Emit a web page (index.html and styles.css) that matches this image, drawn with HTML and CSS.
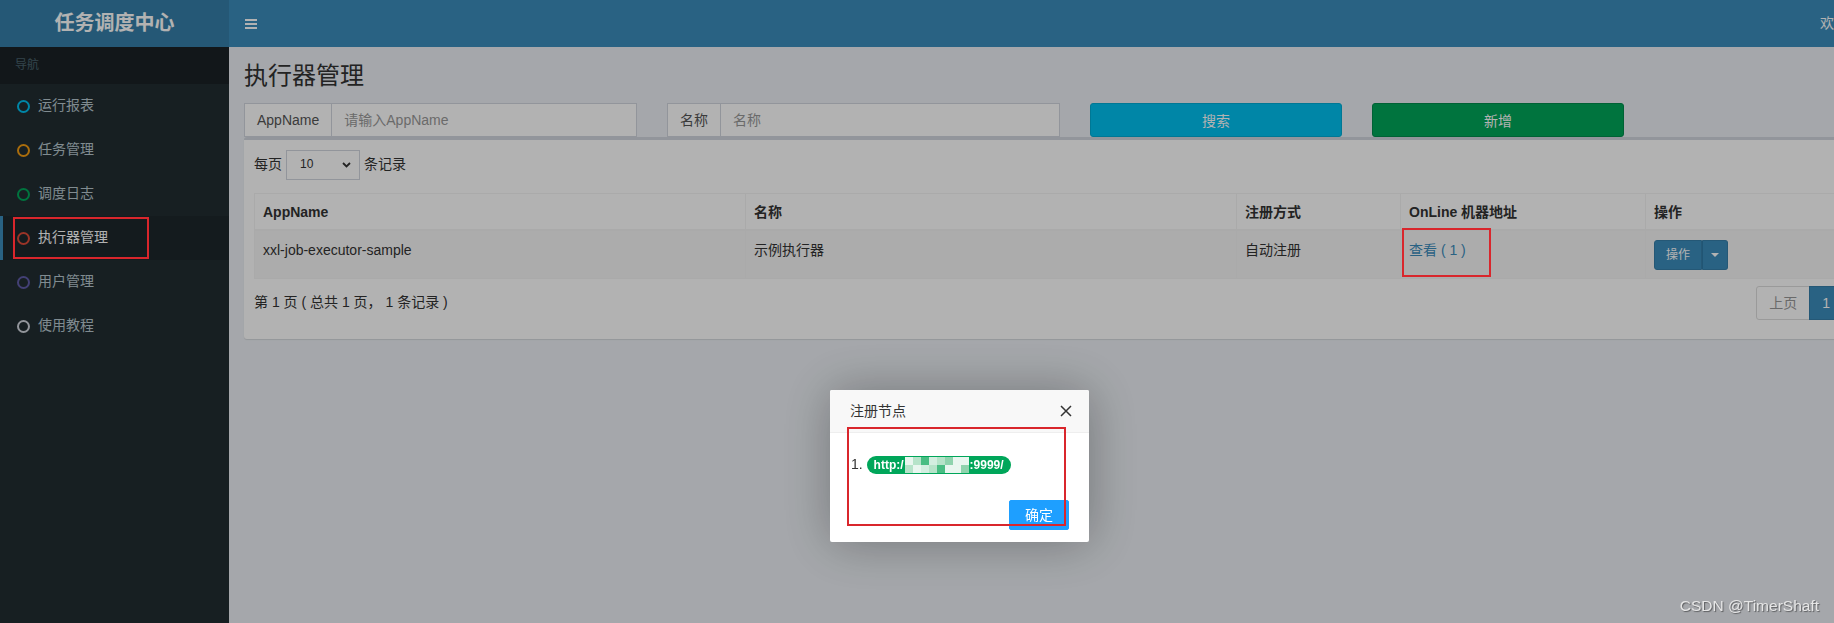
FILE: index.html
```html
<!DOCTYPE html>
<html lang="zh-CN">
<head>
<meta charset="utf-8">
<title>任务调度中心</title>
<link rel="stylesheet" href="styles.css">
</head>
<body>
<div class="wrapper">
  <header class="main-header">
    <div class="logo">任务调度中心</div>
    <nav class="navbar">
      <span class="toggle"><svg width="12" height="10" viewBox="0 0 12 10"><rect y="0" width="12" height="2"/><rect y="4" width="12" height="2"/><rect y="8" width="12" height="2"/></svg></span>
      <span class="welcome">欢迎 admin</span>
    </nav>
  </header>
  <div class="main">
    <aside class="sidebar">
      <div class="nav-header">导航</div>
      <ul class="menu">
        <li><i class="dot aqua"></i>运行报表</li>
        <li><i class="dot yellow"></i>任务管理</li>
        <li><i class="dot green"></i>调度日志</li>
        <li class="active"><i class="dot red"></i>执行器管理</li>
        <li><i class="dot purple"></i>用户管理</li>
        <li><i class="dot gray"></i>使用教程</li>
      </ul>
    </aside>
    <div class="content-wrapper">
      <div class="content-header"><h1 class="page-title">执行器管理</h1></div>
      <section class="content">
        <div class="search-row">
          <div class="col col-3">
            <div class="input-group"><span class="addon">AppName</span><input class="form-control" placeholder="请输入AppName"></div>
          </div>
          <div class="col col-3">
            <div class="input-group"><span class="addon">名称</span><input class="form-control" placeholder="名称"></div>
          </div>
          <div class="col col-2"><button class="btn btn-info">搜索</button></div>
          <div class="col col-2"><button class="btn btn-success">新增</button></div>
        </div>
        <div class="box">
          <div class="box-body">
            <div class="length">每页 <span class="select"><span>10</span><svg width="9" height="6" viewBox="0 0 9 6"><path d="M1 1 L4.5 4.5 L8 1" fill="none" stroke="#333" stroke-width="1.8"/></svg></span> 条记录</div>
            <table class="table">
              <colgroup><col class="w-app"><col class="w-name"><col class="w-type"><col class="w-addr"><col></colgroup>
              <thead>
                <tr><th>AppName</th><th>名称</th><th>注册方式</th><th>OnLine 机器地址</th><th>操作</th></tr>
              </thead>
              <tbody>
                <tr>
                  <td>xxl-job-executor-sample</td>
                  <td>示例执行器</td>
                  <td>自动注册</td>
                  <td><a class="link">查看 ( 1 )</a></td>
                  <td><span class="btn-group"><span class="btn-op">操作</span><span class="btn-caret"><i class="caret"></i></span></span></td>
                </tr>
              </tbody>
            </table>
            <div class="info-row">
              <div class="info">第 1 页 ( 总共 1 页， 1 条记录 )</div>
              <ul class="pagination"><li class="prev">上页</li><li class="active">1</li><li class="next">下页</li></ul>
            </div>
          </div>
        </div>
      </section>
    </div>
  </div>
</div>

<div class="shade"></div>

<div class="layer">
  <div class="layer-title">注册节点<span class="layer-close"><svg width="12" height="12" viewBox="0 0 12 12"><path d="M1 1 L11 11 M11 1 L1 11" stroke="#333" stroke-width="1.5" fill="none"/></svg></span></div>
  <div class="layer-content">1. <span class="badge">http:/<span class="mosaic"><i class="c1"></i><i class="c2"></i><i class="c3"></i><i class="c4"></i><i class="c2"></i><i class="c5"></i><i class="c1"></i><i class="c1"></i><i class="c2"></i><i class="c1"></i><i class="c4"></i><i class="c2"></i><i class="c3"></i><i class="c1"></i><i class="c1"></i><i class="c5"></i></span>:9999/</span></div>
  <div class="layer-btn"><a>确定</a></div>
</div>

<div class="annot annot-nav"></div>
<div class="annot annot-addr"></div>
<div class="annot annot-layer"></div>

<div class="watermark">CSDN @TimerShaft</div>
</body>
</html>
```

FILE: styles.css
```css
html, body {
  margin: 0;
  padding: 0;
  width: 1834px;
  height: 623px;
  overflow: hidden;
}
body {
  position: relative;
  font-family: "Liberation Sans", "Noto Sans CJK SC", sans-serif;
  font-size: 14px;
  line-height: 1.42857;
  color: #333;
}
.wrapper {
  width: 1951px;
  height: 623px;
  display: flex;
  flex-direction: column;
}

/* header */
.main-header {
  display: flex;
  height: 47px;
  flex: none;
}
.logo {
  width: 229px;
  flex: none;
  background: #367fa9;
  color: #fff;
  font-size: 20px;
  font-weight: bold;
  text-align: center;
  line-height: 47px;
}
.navbar {
  flex: 1;
  background: #3c8dbc;
  display: flex;
  align-items: center;
  color: #fff;
}
.toggle {
  display: flex;
  padding-left: 16px;
  fill: #fff;
}
.welcome {
  margin-left: auto;
  width: 90px;
  margin-right: 41px;
  font-size: 14px;
}

/* sidebar */
.main {
  display: flex;
  flex: 1;
}
.sidebar {
  width: 229px;
  flex: none;
  background: #222d32;
}
.nav-header {
  background: #1a2226;
  color: #4b646f;
  font-size: 12px;
  line-height: 17px;
  padding: 10px 15px;
}
.menu {
  list-style: none;
  margin: 0;
  padding: 0;
}
.menu li {
  display: flex;
  align-items: center;
  height: 44px;
  padding-left: 14px;
  border-left: 3px solid transparent;
  color: #b8c7ce;
  font-size: 14px;
}
.menu li.active {
  border-left-color: #3c8dbc;
  background: #1e282c;
  color: #fff;
}
.dot {
  width: 13px;
  height: 13px;
  box-sizing: border-box;
  border: 2.5px solid;
  border-radius: 50%;
  margin-right: 8px;
}
.aqua { border-color: #00c0ef; }
.yellow { border-color: #f39c12; }
.green { border-color: #00a65a; }
.red { border-color: #dd4b39; }
.purple { border-color: #605ca8; }
.gray { border-color: #d2d6de; }

/* content */
.content-wrapper {
  flex: 1;
  background: #ecf0f5;
}
.content-header {
  padding: 15px 15px 0;
}
.page-title {
  margin: 0;
  font-size: 24px;
  font-weight: 400;
  line-height: 27px;
}
.content {
  padding: 14px 15px 15px;
}
.search-row {
  display: flex;
  margin: 0 -15px;
}
.col {
  flex: none;
  box-sizing: border-box;
  padding: 0 15px;
}
.col-3 { width: 423px; }
.col-2 { width: 282px; }
.input-group {
  display: flex;
  height: 34px;
}
.addon {
  padding: 6px 12px;
  border: 1px solid #d2d6de;
  border-right: 0;
  background: #fff;
  color: #555;
  line-height: 20px;
  white-space: nowrap;
}
.form-control {
  flex: 1;
  min-width: 0;
  box-sizing: border-box;
  height: 34px;
  margin: 0;
  padding: 6px 12px;
  border: 1px solid #d2d6de;
  border-radius: 0;
  background: #fff;
  font-family: inherit;
  font-size: 14px;
  color: #555;
  outline: none;
}
.form-control::placeholder {
  color: #999;
}
.btn {
  display: block;
  width: 100%;
  height: 34px;
  border-radius: 3px;
  border: 1px solid transparent;
  font-family: inherit;
  font-size: 14px;
  color: #fff;
}
.btn-info { background: #00c0ef; border-color: #00acd6; }
.btn-success { background: #00a65a; border-color: #008d4c; }

/* box */
.box {
  margin-top: 0;
  background: #fff;
  border-top: 3px solid #d2d6de;
  border-radius: 3px;
  box-shadow: 0 1px 1px rgba(0,0,0,0.1);
}
.box-body {
  padding: 10px;
}
.length {
  display: flex;
  align-items: center;
  gap: 4px;
  height: 30px;
}
.select {
  display: inline-flex;
  align-items: center;
  justify-content: space-between;
  box-sizing: border-box;
  width: 74px;
  height: 30px;
  padding: 0 8px 0 13px;
  border: 1px solid #d2d6de;
  background: #fff;
  font-size: 12px;
}
.table {
  width: 1672px;
  margin-top: 13px;
  border-collapse: collapse;
  table-layout: fixed;
  border: 1px solid #f4f4f4;
}
.w-app { width: 491px; }
.w-name { width: 491px; }
.w-type { width: 164px; }
.w-addr { width: 245px; }
.table th,
.table td {
  padding: 8px;
  text-align: left;
  vertical-align: top;
  line-height: 20px;
  border: 1px solid #f4f4f4;
}
.table th {
  font-weight: bold;
  border-bottom-width: 2px;
  padding-top: 8px;
  padding-bottom: 7px;
}
.table td {
  padding-top: 9px;
}
.table tbody tr {
  background: #f7f7f7;
}
.link {
  color: #3c8dbc;
}
.btn-group {
  display: inline-flex;
  height: 30px;
  font-size: 12px;
  color: #fff;
}
.btn-op {
  display: flex;
  align-items: center;
  padding: 0 11px;
  background: #3c8dbc;
  border: 1px solid #367fa9;
  border-radius: 3px 0 0 3px;
}
.btn-caret {
  display: flex;
  align-items: center;
  padding: 0 8px;
  background: #3c8dbc;
  border: 1px solid #367fa9;
  border-left-color: #2f7aa6;
  border-radius: 0 3px 3px 0;
}
.caret {
  width: 0;
  height: 0;
  border-top: 4px solid #fff;
  border-left: 4px solid transparent;
  border-right: 4px solid transparent;
}
.info-row {
  display: flex;
  justify-content: space-between;
  align-items: center;
  margin-top: 7px;
  height: 34px;
  margin-bottom: 9px;
}
.pagination {
  display: flex;
  list-style: none;
  margin: 0 30px 0 0;
  padding: 0;
}
.pagination li {
  padding: 6px 12px;
  line-height: 20px;
  border: 1px solid #ddd;
  margin-left: -1px;
  background: #fff;
  color: #777;
}
.pagination .prev {
  border-radius: 3px 0 0 3px;
  color: #999;
}
.pagination .active {
  background: #3c8dbc;
  border-color: #367fa9;
  color: #fff;
}

/* overlay */
.shade {
  position: fixed;
  inset: 0;
  background: rgba(0,0,0,0.3);
  z-index: 10;
}
.layer {
  position: fixed;
  left: 830px;
  top: 390px;
  width: 259px;
  background: #fff;
  border-radius: 2px;
  box-shadow: 1px 1px 50px rgba(0,0,0,0.3);
  z-index: 20;
}
.layer-title {
  position: relative;
  height: 42px;
  line-height: 42px;
  padding: 0 80px 0 20px;
  background: #f8f8f8;
  border-bottom: 1px solid #eee;
  border-radius: 2px 2px 0 0;
  color: #333;
  font-size: 14px;
}
.layer-close {
  position: absolute;
  right: 17px;
  top: 15px;
  display: flex;
}
.layer-content {
  padding: 20px 20px 20px 21px;
  line-height: 22px;
  color: #333;
  font-size: 14px;
}
.badge {
  display: inline-flex;
  align-items: center;
  height: 18px;
  box-sizing: border-box;
  padding: 0 7px;
  border-radius: 10px;
  background: #00a65a;
  color: #fff;
  font-size: 12px;
  font-weight: bold;
  vertical-align: middle;
}
.mosaic {
  display: inline-grid;
  grid-template-columns: repeat(8, 8px);
  grid-auto-rows: 8px;
  margin: 0 1px;
}
.mosaic i { display: block; }
.c1 { background: #e9f6ef; }
.c2 { background: #b6e3c9; }
.c3 { background: #49bd83; }
.c4 { background: #d3eee0; }
.c5 { background: #8fd3ad; }
.layer-btn {
  text-align: right;
  padding: 0 15px 12px;
}
.layer-btn a {
  display: inline-block;
  height: 28px;
  line-height: 28px;
  margin: 5px 5px 0;
  padding: 0 15px;
  border: 1px solid #1e9fff;
  background: #1e9fff;
  color: #fff;
  border-radius: 2px;
  font-size: 14px;
}

.annot {
  position: absolute;
  box-sizing: border-box;
  border: 2px solid #d9262c;
  z-index: 30;
}
.annot-nav { left: 13px; top: 217px; width: 136px; height: 42px; }
.annot-addr { left: 1402px; top: 228px; width: 89px; height: 49px; }
.annot-layer { left: 847px; top: 427px; width: 219px; height: 99px; }

.watermark {
  position: fixed;
  right: 15px;
  bottom: 6px;
  z-index: 40;
  font-size: 15.5px;
  color: #e6e6e6;
  text-shadow: 1px 1px 1px rgba(0,0,0,0.45);
}
```
